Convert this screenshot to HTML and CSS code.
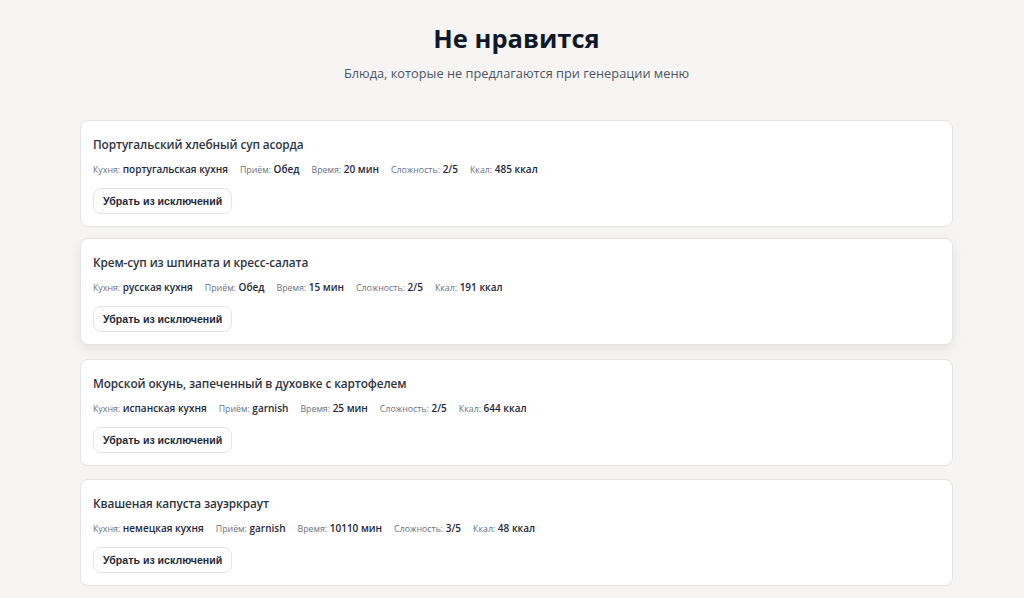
FILE: index.html
```html
<!DOCTYPE html>
<html lang="ru">
<head>
<meta charset="utf-8">
<title>Не нравится</title>
<link rel="stylesheet" href="styles.css">
</head>
<body>
<main class="page">
  <header class="head">
    <h1 class="title">Не нравится</h1>
    <p class="subtitle">Блюда, которые не предлагаются при генерации меню</p>
  </header>
  <section class="list">
    <article class="card">
      <h2 class="dish">Португальский хлебный суп асорда</h2>
      <div class="meta">
        <span class="item"><span class="lbl">Кухня:</span> <b>португальская кухня</b></span>
        <span class="item"><span class="lbl">Приём:</span> <b>Обед</b></span>
        <span class="item"><span class="lbl">Время:</span> <b>20 мин</b></span>
        <span class="item"><span class="lbl">Сложность:</span> <b>2/5</b></span>
        <span class="item"><span class="lbl">Ккал:</span> <b>485 ккал</b></span>
      </div>
      <button class="btn">Убрать из исключений</button>
    </article>
    <article class="card hover">
      <h2 class="dish">Крем-суп из шпината и кресс-салата</h2>
      <div class="meta">
        <span class="item"><span class="lbl">Кухня:</span> <b>русская кухня</b></span>
        <span class="item"><span class="lbl">Приём:</span> <b>Обед</b></span>
        <span class="item"><span class="lbl">Время:</span> <b>15 мин</b></span>
        <span class="item"><span class="lbl">Сложность:</span> <b>2/5</b></span>
        <span class="item"><span class="lbl">Ккал:</span> <b>191 ккал</b></span>
      </div>
      <button class="btn">Убрать из исключений</button>
    </article>
    <article class="card">
      <h2 class="dish">Морской окунь, запеченный в духовке с картофелем</h2>
      <div class="meta">
        <span class="item"><span class="lbl">Кухня:</span> <b>испанская кухня</b></span>
        <span class="item"><span class="lbl">Приём:</span> <b>garnish</b></span>
        <span class="item"><span class="lbl">Время:</span> <b>25 мин</b></span>
        <span class="item"><span class="lbl">Сложность:</span> <b>2/5</b></span>
        <span class="item"><span class="lbl">Ккал:</span> <b>644 ккал</b></span>
      </div>
      <button class="btn">Убрать из исключений</button>
    </article>
    <article class="card">
      <h2 class="dish">Квашеная капуста зауэркраут</h2>
      <div class="meta">
        <span class="item"><span class="lbl">Кухня:</span> <b>немецкая кухня</b></span>
        <span class="item"><span class="lbl">Приём:</span> <b>garnish</b></span>
        <span class="item"><span class="lbl">Время:</span> <b>10110 мин</b></span>
        <span class="item"><span class="lbl">Сложность:</span> <b>3/5</b></span>
        <span class="item"><span class="lbl">Ккал:</span> <b>48 ккал</b></span>
      </div>
      <button class="btn">Убрать из исключений</button>
    </article>
  </section>
</main>
</body>
</html>
```
FILE: styles.css
```css
* { box-sizing: border-box; }
html, body { margin: 0; padding: 0; }
body {
  background: #f6f5f3;
  font-family: "Open Sans", "Noto Sans", sans-serif;
  color: #1f2937;
  overflow: hidden;
  padding-left: 9px;
}
.page {
  width: 873px;
  margin: 0 auto;
  padding-top: 18px;
}
.head { text-align: center; }
.title {
  margin: 0;
  font-size: 25.5px;
  font-weight: 700;
  line-height: 40px;
  color: #111827;
}
.subtitle {
  margin: 6px 0 0;
  font-size: 12.8px;
  line-height: 18px;
  color: #4b5563;
}
.list {
  margin-top: 38px;
  display: flex;
  flex-direction: column;
  gap: 12.5px;
}
.card {
  background: #fff;
  border: 1px solid #e4e4e4;
  border-radius: 8px;
  padding: 13px 12px 12px;
  height: 107px;
}
.card.hover {
  transform: translateY(-2px);
  box-shadow: 0 4px 12px rgba(0,0,0,0.08);
}
.dish {
  margin: 0;
  font-size: 11.8px;
  font-weight: 600;
  letter-spacing: -0.1px;
  line-height: 20px;
  color: #30353d;
}
.meta {
  margin-top: 7px;
  display: flex;
  gap: 12px;
  line-height: 16px;
  font-size: 10px;
}
.lbl { font-size: 8.8px; color: #6b7280; }
.meta b { font-weight: 600; color: #1f2937; }
.btn {
  margin-top: 10px;
  height: 26px;
  padding: 0 9px;
  border: 1px solid #e2e4e8;
  border-radius: 8px;
  background: #fff;
  font-family: "Liberation Sans", Arial, sans-serif;
  font-size: 10.6px;
  font-weight: 700;
  color: #1f2937;
}
```
